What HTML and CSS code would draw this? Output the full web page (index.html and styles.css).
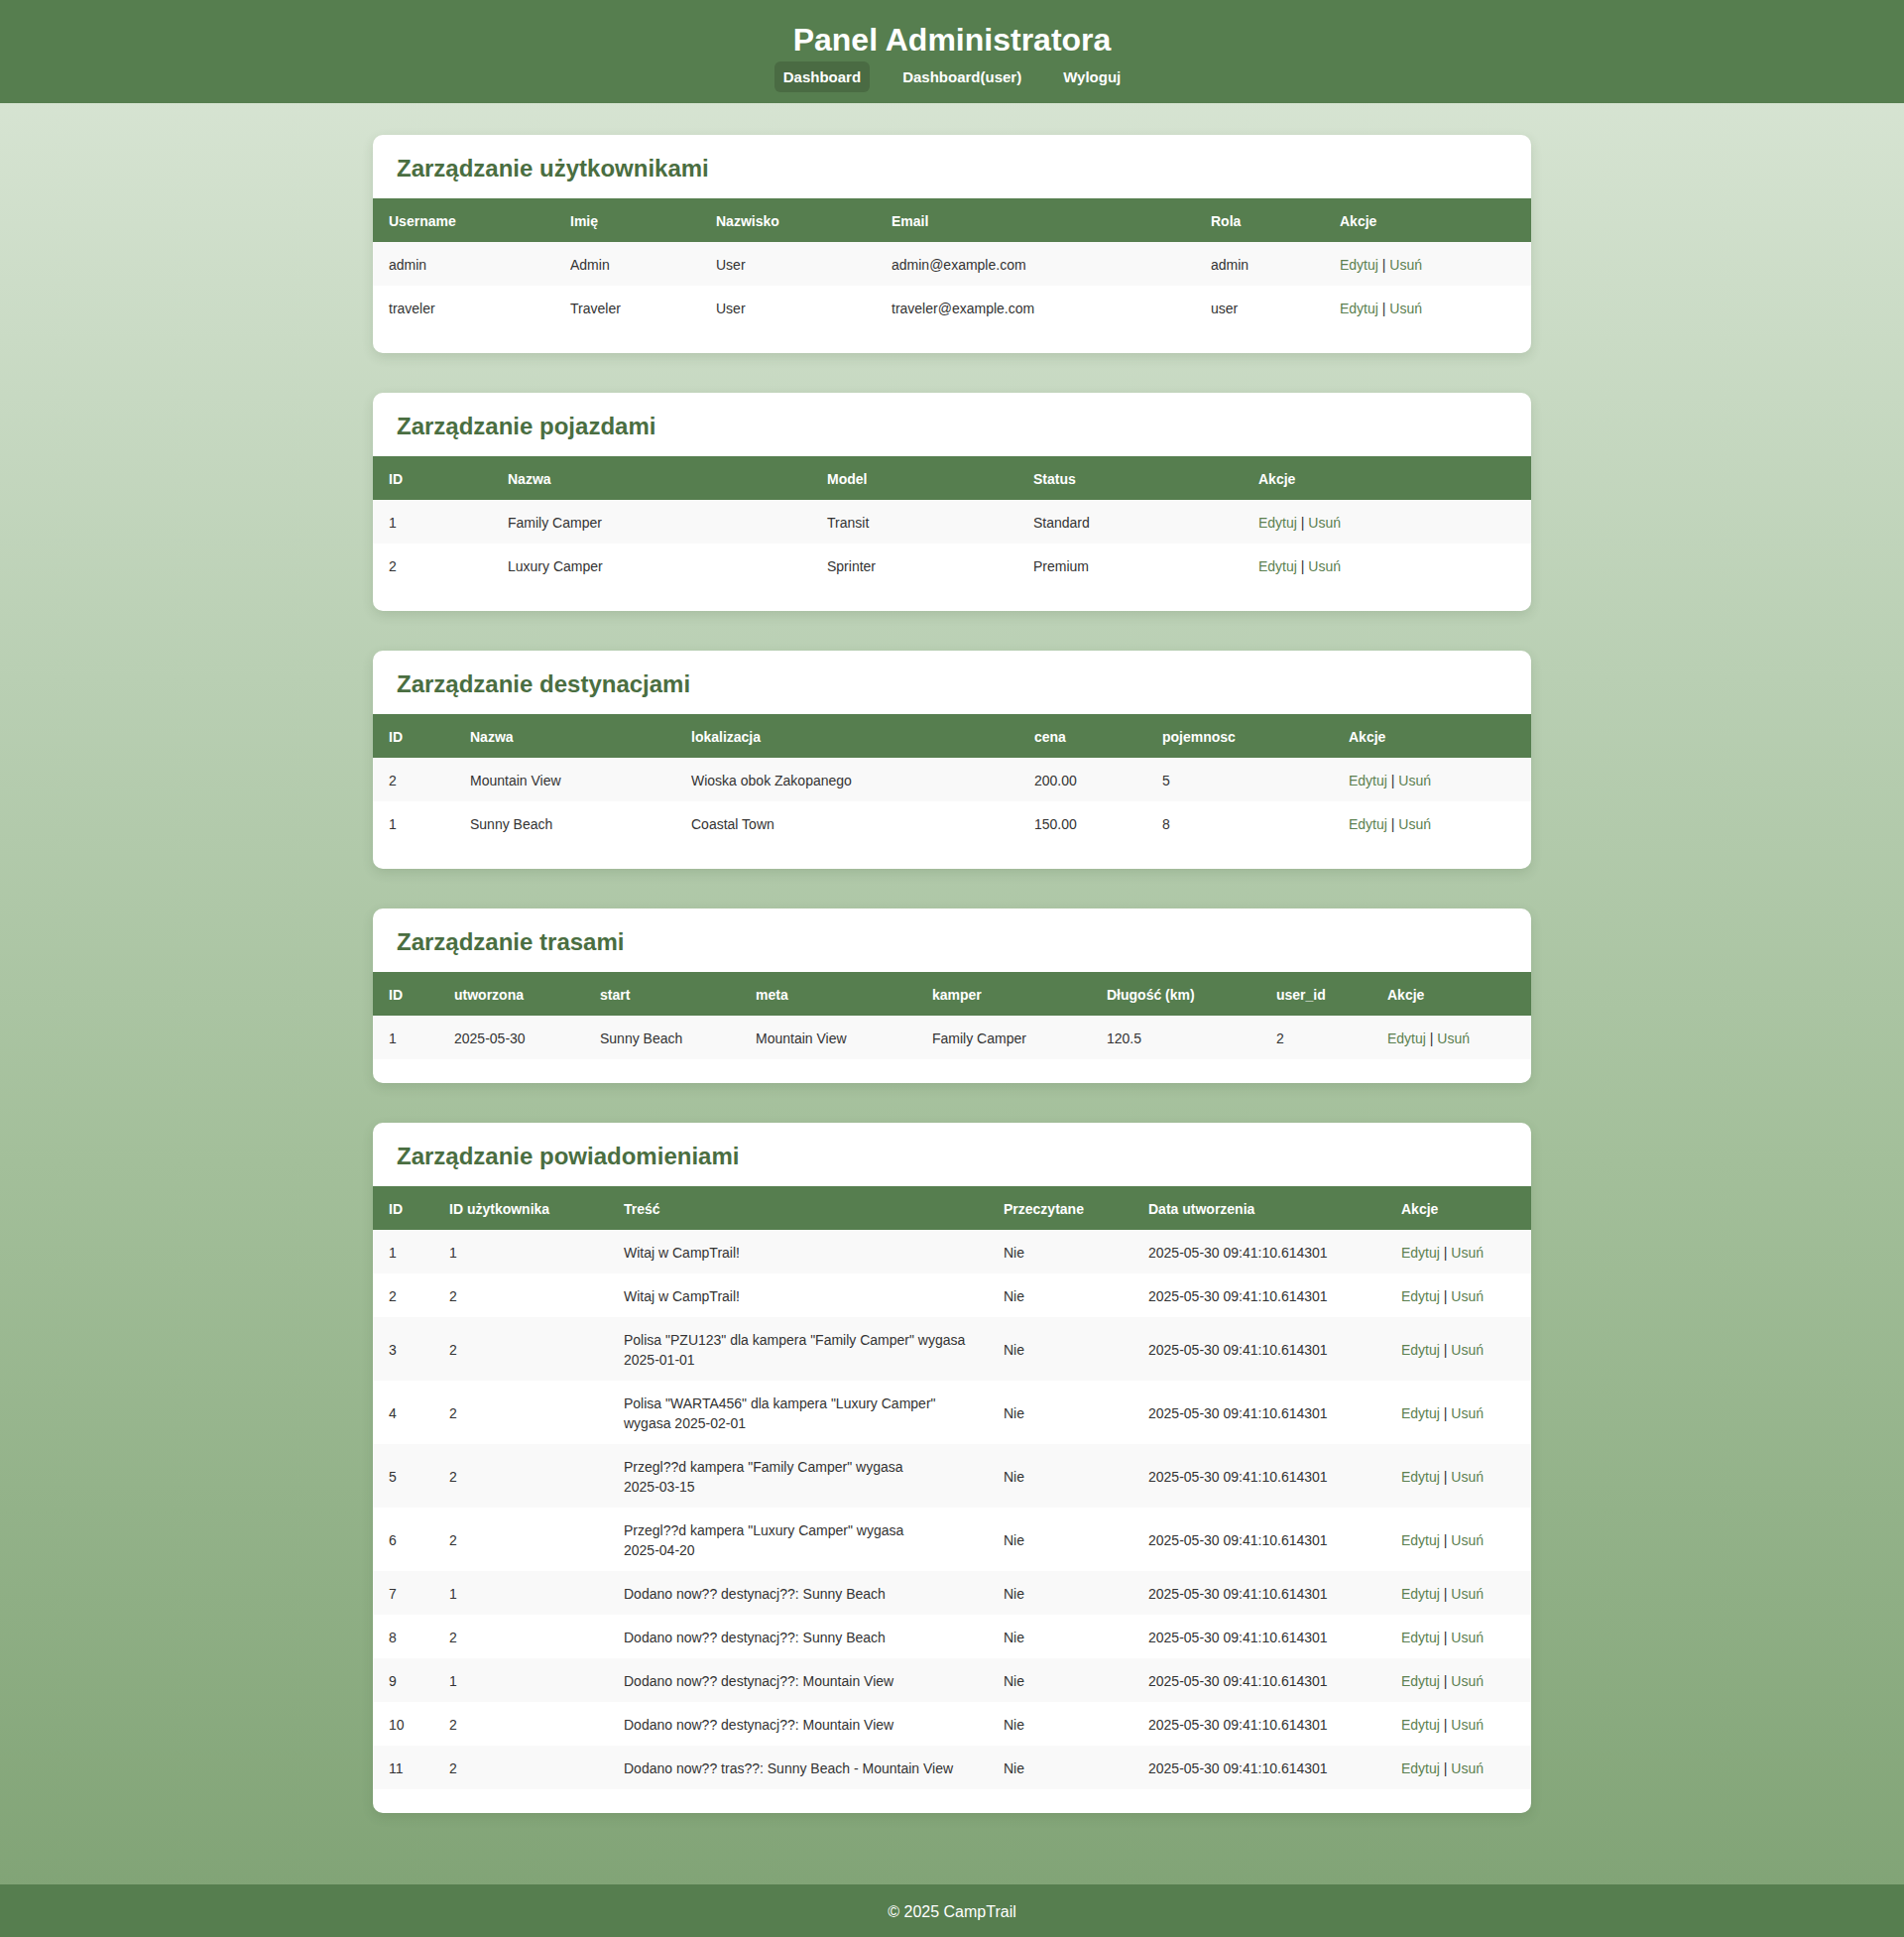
FILE: index.html
```html
<!DOCTYPE html>
<html lang="pl">
<head>
<meta charset="utf-8">
<title>Panel Administratora</title>
<link rel="stylesheet" href="styles.css">
</head>
<body>
<header class="site-header">
  <h1 class="site-title">Panel Administratora</h1>
  <nav class="site-nav">
    <a class="nav-link active" href="#">Dashboard</a>
    <a class="nav-link" href="#">Dashboard(user)</a>
    <a class="nav-link" href="#">Wyloguj</a>
  </nav>
</header>

<main class="content">
  <section class="card">
    <h2 class="card-title">Zarządzanie użytkownikami</h2>
    <table class="data-table">
      <colgroup>
        <col class="u1"><col class="u2"><col class="u3"><col class="u4"><col class="u5"><col>
      </colgroup>
      <thead>
        <tr><th>Username</th><th>Imię</th><th>Nazwisko</th><th>Email</th><th>Rola</th><th>Akcje</th></tr>
      </thead>
      <tbody>
        <tr><td>admin</td><td>Admin</td><td>User</td><td>admin@example.com</td><td>admin</td><td><a class="act" href="#">Edytuj</a> | <a class="act" href="#">Usuń</a></td></tr>
        <tr><td>traveler</td><td>Traveler</td><td>User</td><td>traveler@example.com</td><td>user</td><td><a class="act" href="#">Edytuj</a> | <a class="act" href="#">Usuń</a></td></tr>
      </tbody>
    </table>
  </section>

  <section class="card">
    <h2 class="card-title">Zarządzanie pojazdami</h2>
    <table class="data-table">
      <colgroup>
        <col class="v1"><col class="v2"><col class="v3"><col class="v4"><col>
      </colgroup>
      <thead>
        <tr><th>ID</th><th>Nazwa</th><th>Model</th><th>Status</th><th>Akcje</th></tr>
      </thead>
      <tbody>
        <tr><td>1</td><td>Family Camper</td><td>Transit</td><td>Standard</td><td><a class="act" href="#">Edytuj</a> | <a class="act" href="#">Usuń</a></td></tr>
        <tr><td>2</td><td>Luxury Camper</td><td>Sprinter</td><td>Premium</td><td><a class="act" href="#">Edytuj</a> | <a class="act" href="#">Usuń</a></td></tr>
      </tbody>
    </table>
  </section>

  <section class="card">
    <h2 class="card-title">Zarządzanie destynacjami</h2>
    <table class="data-table">
      <colgroup>
        <col class="d1"><col class="d2"><col class="d3"><col class="d4"><col class="d5"><col>
      </colgroup>
      <thead>
        <tr><th>ID</th><th>Nazwa</th><th>lokalizacja</th><th>cena</th><th>pojemnosc</th><th>Akcje</th></tr>
      </thead>
      <tbody>
        <tr><td>2</td><td>Mountain View</td><td>Wioska obok Zakopanego</td><td>200.00</td><td>5</td><td><a class="act" href="#">Edytuj</a> | <a class="act" href="#">Usuń</a></td></tr>
        <tr><td>1</td><td>Sunny Beach</td><td>Coastal Town</td><td>150.00</td><td>8</td><td><a class="act" href="#">Edytuj</a> | <a class="act" href="#">Usuń</a></td></tr>
      </tbody>
    </table>
  </section>

  <section class="card">
    <h2 class="card-title">Zarządzanie trasami</h2>
    <table class="data-table">
      <colgroup>
        <col class="r1"><col class="r2"><col class="r3"><col class="r4"><col class="r5"><col class="r6"><col class="r7"><col>
      </colgroup>
      <thead>
        <tr><th>ID</th><th>utworzona</th><th>start</th><th>meta</th><th>kamper</th><th>Długość (km)</th><th>user_id</th><th>Akcje</th></tr>
      </thead>
      <tbody>
        <tr><td>1</td><td>2025-05-30</td><td>Sunny Beach</td><td>Mountain View</td><td>Family Camper</td><td>120.5</td><td>2</td><td><a class="act" href="#">Edytuj</a> | <a class="act" href="#">Usuń</a></td></tr>
      </tbody>
    </table>
  </section>

  <section class="card">
    <h2 class="card-title">Zarządzanie powiadomieniami</h2>
    <table class="data-table">
      <colgroup>
        <col class="n1"><col class="n2"><col class="n3"><col class="n4"><col class="n5"><col>
      </colgroup>
      <thead>
        <tr><th>ID</th><th>ID użytkownika</th><th>Treść</th><th>Przeczytane</th><th>Data utworzenia</th><th>Akcje</th></tr>
      </thead>
      <tbody>
        <tr><td>1</td><td>1</td><td>Witaj w CampTrail!</td><td>Nie</td><td>2025-05-30 09:41:10.614301</td><td><a class="act" href="#">Edytuj</a> | <a class="act" href="#">Usuń</a></td></tr>
        <tr><td>2</td><td>2</td><td>Witaj w CampTrail!</td><td>Nie</td><td>2025-05-30 09:41:10.614301</td><td><a class="act" href="#">Edytuj</a> | <a class="act" href="#">Usuń</a></td></tr>
        <tr><td>3</td><td>2</td><td>Polisa "PZU123" dla kampera "Family Camper" wygasa <span class="date">2025-01-01</span></td><td>Nie</td><td>2025-05-30 09:41:10.614301</td><td><a class="act" href="#">Edytuj</a> | <a class="act" href="#">Usuń</a></td></tr>
        <tr><td>4</td><td>2</td><td>Polisa "WARTA456" dla kampera "Luxury Camper" wygasa <span class="date">2025-02-01</span></td><td>Nie</td><td>2025-05-30 09:41:10.614301</td><td><a class="act" href="#">Edytuj</a> | <a class="act" href="#">Usuń</a></td></tr>
        <tr><td>5</td><td>2</td><td>Przegl??d kampera "Family Camper" wygasa <span class="date">2025-03-15</span></td><td>Nie</td><td>2025-05-30 09:41:10.614301</td><td><a class="act" href="#">Edytuj</a> | <a class="act" href="#">Usuń</a></td></tr>
        <tr><td>6</td><td>2</td><td>Przegl??d kampera "Luxury Camper" wygasa <span class="date">2025-04-20</span></td><td>Nie</td><td>2025-05-30 09:41:10.614301</td><td><a class="act" href="#">Edytuj</a> | <a class="act" href="#">Usuń</a></td></tr>
        <tr><td>7</td><td>1</td><td>Dodano now?? destynacj??: Sunny Beach</td><td>Nie</td><td>2025-05-30 09:41:10.614301</td><td><a class="act" href="#">Edytuj</a> | <a class="act" href="#">Usuń</a></td></tr>
        <tr><td>8</td><td>2</td><td>Dodano now?? destynacj??: Sunny Beach</td><td>Nie</td><td>2025-05-30 09:41:10.614301</td><td><a class="act" href="#">Edytuj</a> | <a class="act" href="#">Usuń</a></td></tr>
        <tr><td>9</td><td>1</td><td>Dodano now?? destynacj??: Mountain View</td><td>Nie</td><td>2025-05-30 09:41:10.614301</td><td><a class="act" href="#">Edytuj</a> | <a class="act" href="#">Usuń</a></td></tr>
        <tr><td>10</td><td>2</td><td>Dodano now?? destynacj??: Mountain View</td><td>Nie</td><td>2025-05-30 09:41:10.614301</td><td><a class="act" href="#">Edytuj</a> | <a class="act" href="#">Usuń</a></td></tr>
        <tr><td>11</td><td>2</td><td>Dodano now?? tras??: Sunny Beach - Mountain View</td><td>Nie</td><td>2025-05-30 09:41:10.614301</td><td><a class="act" href="#">Edytuj</a> | <a class="act" href="#">Usuń</a></td></tr>
      </tbody>
    </table>
  </section>
</main>

<footer class="site-footer">© 2025 CampTrail</footer>
</body>
</html>
```

FILE: styles.css
```css
* { box-sizing: border-box; }

html, body {
  margin: 0;
  padding: 0;
}

body {
  font-family: "Liberation Sans", Arial, sans-serif;
  color: #333;
  background: linear-gradient(to bottom, #dbe7d7 0%, #b9cfb3 35%, #a3bf9a 60%, #7fa274 100%);
  min-height: 1953px;
  display: flex;
  flex-direction: column;
}

/* header */
.site-header {
  background: #567e4f;
  color: #fff;
  text-align: center;
  padding: 19px 0 11px;
}

.site-title {
  margin: 0 0 1px;
  font-size: 32px;
  line-height: 42px;
  font-weight: 700;
}

.site-nav {
  display: flex;
  justify-content: center;
  gap: 24px;
}

.nav-link {
  color: #fff;
  text-decoration: none;
  font-size: 15px;
  font-weight: 700;
  line-height: 21px;
  padding: 5px 9px;
  border-radius: 6px;
}

.nav-link.active {
  background: #4a6b43;
}

/* main */
.content {
  flex: 1;
  padding: 32px 0 32px;
}

.card {
  width: 1168px;
  margin: 0 auto 40px;
  background: #fff;
  border-radius: 10px;
  box-shadow: 0 4px 12px rgba(40, 70, 35, 0.14);
  padding: 18px 0 24px;
  overflow: hidden;
}

.card-title {
  margin: 0 24px 14px;
  font-size: 24px;
  line-height: 32px;
  font-weight: 700;
  color: #4a6e41;
}

/* tables */
.data-table {
  width: 100%;
  border-collapse: collapse;
  table-layout: fixed;
  font-size: 14px;
  line-height: 20px;
}

.data-table th {
  background: #567e4f;
  color: #fff;
  font-weight: 700;
  text-align: left;
  padding: 13px 16px 11px;
}

.data-table td {
  padding: 13px 16px 11px;
  vertical-align: middle;
  color: #333;
}

.data-table tbody tr:nth-child(odd) td {
  background: #f9f9f9;
}

.date {
  white-space: nowrap;
}

.act {
  color: #5b8050;
  text-decoration: none;
}

/* column widths */
.u1 { width: 183px; }
.u2 { width: 147px; }
.u3 { width: 177px; }
.u4 { width: 322px; }
.u5 { width: 130px; }

.v1 { width: 120px; }
.v2 { width: 322px; }
.v3 { width: 208px; }
.v4 { width: 227px; }

.d1 { width: 82px; }
.d2 { width: 223px; }
.d3 { width: 346px; }
.d4 { width: 129px; }
.d5 { width: 188px; }

.r1 { width: 66px; }
.r2 { width: 147px; }
.r3 { width: 157px; }
.r4 { width: 178px; }
.r5 { width: 176px; }
.r6 { width: 171px; }
.r7 { width: 112px; }

.n1 { width: 61px; }
.n2 { width: 176px; }
.n3 { width: 383px; }
.n4 { width: 146px; }
.n5 { width: 255px; }

/* footer */
.site-footer {
  background: #567e4f;
  color: #fff;
  text-align: center;
  font-size: 16px;
  line-height: 21px;
  padding: 17px 0 15px;
}
```
